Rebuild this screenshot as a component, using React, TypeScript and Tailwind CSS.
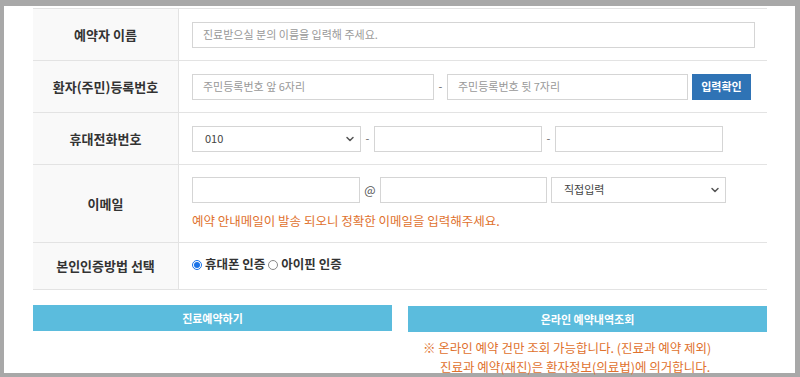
import { ChevronDown } from 'lucide-react';

const font = { fontFamily: '"Noto Sans CJK KR", "Noto Sans", sans-serif' };

function Row({ label, h, children }: { label: string; h: string; children: React.ReactNode }) {
  return (
    <div className={`flex border-b border-[#e3e3e3] ${h}`}>
      <div className="flex w-[146px] shrink-0 items-center justify-center border-r border-[#e3e3e3] bg-[#f9f9f9] text-[13px] font-bold text-[#333]">
        {label}
      </div>
      <div className="flex flex-1 flex-col justify-center pl-[13px]">{children}</div>
    </div>
  );
}

function Field({ w, placeholder }: { w: string; placeholder?: string }) {
  return (
    <div className={`flex h-[26px] items-center border border-[#d5d5d5] bg-white pl-[10px] text-[11px] text-[#999] ${w}`}>
      {placeholder}
    </div>
  );
}

function Select({ w, value }: { w: string; value: string }) {
  return (
    <div className={`flex h-[26px] items-center justify-between border border-[#d5d5d5] bg-white pl-[12px] pr-[4px] text-[11px] text-[#444] ${w}`}>
      <span>{value}</span>
      <ChevronDown className="h-3 w-3 text-[#555]" strokeWidth={3} />
    </div>
  );
}

function Dash() {
  return <span className="w-[13px] text-center text-[11px] text-[#666]">-</span>;
}

export default function App() {
  return (
    <div className="h-[377px] w-[800px] bg-[#a8a8a8] pb-[4px] pl-[4px] pr-[5px] pt-[6px]" style={font}>
      <div className="h-full bg-white pl-[29px] pt-[2px]">
        <div className="w-[734px] border-t border-[#e3e3e3]">
          <Row label="예약자 이름" h="h-[52px]">
            <Field w="w-[563px]" placeholder="진료받으실 분의 이름을 입력해 주세요." />
          </Row>
          <Row label="환자(주민)등록번호" h="h-[52px]">
            <div className="flex items-center">
              <Field w="w-[242px]" placeholder="주민등록번호 앞 6자리" />
              <span className="w-[13px] text-center text-[11px] text-[#666]">-</span>
              <Field w="w-[241px]" placeholder="주민등록번호 뒷 7자리" />
              <button className="ml-[4px] h-[26px] w-[59px] bg-[#2f73b5] text-[11px] font-bold text-white">입력확인</button>
            </div>
          </Row>
          <Row label="휴대전화번호" h="h-[52px]">
            <div className="flex items-center">
              <Select w="w-[169px]" value="010" />
              <Dash />
              <Field w="w-[168px]" />
              <Dash />
              <Field w="w-[168px]" />
            </div>
          </Row>
          <Row label="이메일" h="h-[78px]">
            <div className="flex items-center">
              <Field w="w-[168px]" />
              <span className="w-[20px] text-center text-[12px] text-[#555]">@</span>
              <Field w="w-[167px]" />
              <div className="w-[4px]" />
              <Select w="w-[175px]" value="직접입력" />
            </div>
            <p className="mt-[9px] text-[12.5px] text-[#e0712d]">예약 안내메일이 발송 되오니 정확한 이메일을 입력해주세요.</p>
          </Row>
          <Row label="본인인증방법 선택" h="h-[47px]">
            <div className="-mt-[3px] flex items-center text-[12.5px] font-bold text-[#333]">
              <span className="mr-[3px] flex h-[10px] w-[10px] items-center justify-center rounded-full border border-[#1a73e8] bg-white">
                <span className="h-[6px] w-[6px] rounded-full bg-[#1a73e8]" />
              </span>
              <span>휴대폰 인증</span>
              <span className="ml-[3px] mr-[3px] h-[10px] w-[10px] rounded-full border border-[#888] bg-white" />
              <span>아이핀 인증</span>
            </div>
          </Row>
        </div>
        <div className="mt-[15px] flex w-[734px] justify-between">
          <button className="h-[26px] w-[359px] bg-[#5bbcdd] text-[11px] font-bold text-white">진료예약하기</button>
          <div className="w-[359px]">
            <button className="h-[26px] w-full bg-[#5bbcdd] text-[11px] font-bold text-white">온라인 예약내역조회</button>
            <div className="mt-[6px] pl-[15px] text-[12.5px] leading-[19px] text-[#e0712d]">
              <p className="whitespace-nowrap">※ 온라인 예약 건만 조회 가능합니다. (진료과 예약 제외)</p>
              <p className="whitespace-nowrap pl-[17px]">진료과 예약(재진)은 환자정보(의료법)에 의거합니다.</p>
            </div>
          </div>
        </div>
      </div>
    </div>
  );
}
